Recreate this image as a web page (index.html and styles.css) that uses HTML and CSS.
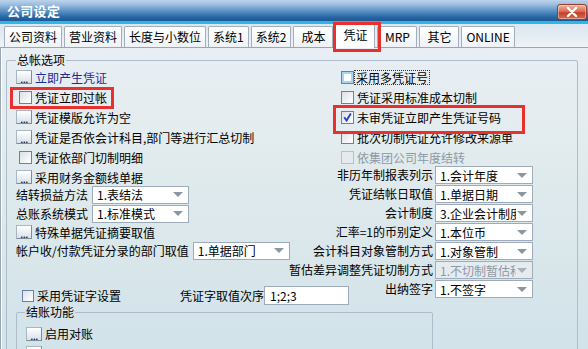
FILE: index.html
```html
<!DOCTYPE html>
<html lang="zh-CN">
<head>
<meta charset="utf-8">
<title>公司设定</title>
<link rel="stylesheet" href="styles.css">
</head>
<body>
<div class="window">
  <div class="titlebar">
    <span class="title">公司设定</span>
    <div class="close"><svg width="12" height="10" viewBox="0 0 12 10"><path d="M2 1 L10 9 M10 1 L2 9" stroke="#fff" stroke-width="2.4" stroke-linecap="round"/></svg></div>
  </div>
  <div class="tabstrip">
    <div class="tab">公司资料</div>
    <div class="tab">营业资料</div>
    <div class="tab">长度与小数位</div>
    <div class="tab">系统1</div>
    <div class="tab">系统2</div>
    <div class="tab">成本</div>
    <div class="tab active">凭证</div>
    <div class="tab">MRP</div>
    <div class="tab">其它</div>
    <div class="tab">ONLINE</div>
  </div>
  <div class="panel">
    <fieldset class="group main">
      <legend>总帐选项</legend>
      <div class="cols">
        <div class="col left">
          <div class="row"><span class="dots">...</span><span class="link">立即产生凭证</span></div>
          <div class="row"><span class="cb"></span><span>凭证立即过帐</span></div>
          <div class="row"><span class="dots">...</span><span>凭证模版允许为空</span></div>
          <div class="row"><span class="dots">...</span><span>凭证是否依会计科目,部门等进行汇总切制</span></div>
          <div class="row"><span class="cb"></span><span>凭证依部门切制明细</span></div>
          <div class="row"><span class="dots">...</span><span>采用财务金额线单据</span></div>
          <div class="srow first"><span class="lbl">结转损益方法</span><div class="sel"><span class="val">1.表结法</span><span class="arr"></span></div></div>
          <div class="srow"><span class="lbl">总账系统模式</span><div class="sel"><span class="val">1.标准模式</span><span class="arr"></span></div></div>
          <div class="row short"><span class="dots">...</span><span>特殊单据凭证摘要取值</span></div>
          <div class="srow"><span class="lbl">帐户收/付款凭证分录的部门取值</span><div class="sel"><span class="val">1.单据部门</span><span class="arr"></span></div></div>
          <div class="row wordrow"><span class="cb small"></span><span>采用凭证字设置</span><span class="wlbl">凭证字取值次序</span><span class="input">1;2;3</span></div>
        </div>
        <div class="col right">
          <div class="row"><span class="cb focus"></span><span class="focustext">采用多凭证号</span></div>
          <div class="row"><span class="cb"></span><span>凭证采用标准成本切制</span></div>
          <div class="row"><span class="cb checked"><svg width="11" height="11" viewBox="0 0 11 11"><path d="M2.2 5.2 L4.6 8.6 L8.8 1.6" fill="none" stroke="#2348b8" stroke-width="1.9"/></svg></span><span>未审凭证立即产生凭证号码</span></div>
          <div class="row"><span class="cb"></span><span>批次切制凭证允许修改来源单</span></div>
          <div class="row disabled"><span class="cb"></span><span>依集团公司年度结转</span></div>
          <div class="rsrow first"><span class="lbl">非历年制报表列示</span><div class="sel"><span class="val">1.会计年度</span><span class="arr"></span></div></div>
          <div class="rsrow"><span class="lbl">凭证结帐日取值</span><div class="sel"><span class="val">1.单据日期</span><span class="arr"></span></div></div>
          <div class="rsrow"><span class="lbl">会计制度</span><div class="sel"><span class="val">3.企业会计制度</span><span class="arr"></span></div></div>
          <div class="rsrow"><span class="lbl">汇率=1的币别定义</span><div class="sel"><span class="val">1.本位币</span><span class="arr"></span></div></div>
          <div class="rsrow"><span class="lbl">会计科目对象管制方式</span><div class="sel"><span class="val">1.对象管制</span><span class="arr"></span></div></div>
          <div class="rsrow"><span class="lbl">暂估差异调整凭证切制方式</span><div class="sel dis"><span class="val">1.不切制暂估科目</span><span class="arr"></span></div></div>
          <div class="rsrow"><span class="lbl">出纳签字</span><div class="sel"><span class="val">1.不签字</span><span class="arr"></span></div></div>
        </div>
      </div>
      <fieldset class="group sub">
        <legend>结账功能</legend>
        <div class="row first"><span class="dots">...</span><span>启用对账</span></div>
        <div class="row"><span class="dots">...</span></div>
      </fieldset>
    </fieldset>
  </div>
</div>
<div class="mark mark-tab"></div>
<div class="mark mark-left"></div>
<div class="mark mark-right"></div>
</body>
</html>
```

FILE: styles.css
```css
* { box-sizing: border-box; }
html, body { margin: 0; padding: 0; }
body {
  position: relative;
  width: 588px;
  height: 349px;
  overflow: hidden;
  font-family: "Noto Sans CJK SC", "Noto Sans", sans-serif;
  font-size: 12px;
  color: #000;
  background: #d6e3ea;
}
.window { display: flex; flex-direction: column; height: 349px; }

.titlebar {
  flex: none;
  height: 24px;
  display: flex;
  align-items: flex-start;
  padding-left: 7px;
  background: linear-gradient(#bcd3ea 0, #9dbfe0 18%, #5d93c6 45%, #2a68a5 70%, #1b5895 87%, #2bb8e6 88%, #2bb8e6 100%);
}
.title {
  color: #fff;
  font-weight: bold;
  font-size: 13px;
  line-height: 21px;
  letter-spacing: 0.3px;
}
.close {
  margin: 4px 1px 0 auto;
  width: 30px;
  height: 16px;
  border: 1px solid #9a3b2c;
  border-radius: 3px;
  background: linear-gradient(#f0b7a4, #d9634a 50%, #c0402a 55%, #d86a4e);
  display: flex;
  align-items: center;
  justify-content: center;
  box-shadow: inset 0 0 0 1px rgba(255,255,255,0.4);
}

.tabstrip {
  flex: none;
  height: 24px;
  display: flex;
  align-items: flex-end;
  gap: 2px;
  padding-left: 4px;
  background: linear-gradient(#dbe6ef, #eef3f7);
  border-bottom: 1px solid #97a5b4;
}
.tab {
  height: 21px;
  min-width: 40px;
  padding: 0 4px;
  border: 1px solid #a3aebc;
  border-bottom: none;
  border-radius: 2px 2px 0 0;
  background: linear-gradient(#ffffff, #eef2f6);
  line-height: 20px;
  text-align: center;
  white-space: nowrap;
}
.tab.active {
  height: 24px;
  margin-bottom: -1px;
  background: #fff;
  line-height: 19px;
  position: relative;
}

.panel {
  flex: 1;
  border-left: 1px solid #9aa8b6;
  box-shadow: inset 1px 0 0 #fff;
  padding: 0 0 0 5px;
  background: linear-gradient(#e8eef4 0%, #e3ecee 30%, #dae7eb 65%, #d2e3ea 100%);
  overflow: hidden;
}

fieldset.group {
  margin: 0;
  border: 1px solid #aebdcb;
  border-radius: 2px;
  min-inline-size: 0;
}
fieldset.group legend {
  padding: 0 1px;
  line-height: 14px;
  font-size: 12px;
}
.main {
  margin-top: 5px !important;
  width: 572px;
  padding: 0 8px 40px 9px;
}
.cols {
  display: grid;
  grid-template-columns: 317px minmax(0, 1fr);
}
.col { display: flex; flex-direction: column; min-width: 0; }

.row {
  height: 20px;
  display: flex;
  align-items: center;
  white-space: nowrap;
}
.row.short { height: 18px; }
.dots {
  flex: none;
  width: 16px;
  height: 14px;
  margin-right: 3px;
  border: 1px solid #a9b5c1;
  border-right-color: #7f8c9a;
  border-bottom-color: #7f8c9a;
  background: linear-gradient(#ffffff, #d9e1e9);
  font-size: 11px;
  line-height: 14px;
  text-align: center;
  letter-spacing: -0.5px;
}
.link { color: #1a2d96; }

.cb {
  flex: none;
  width: 13px;
  height: 13px;
  margin: 0 3px 0 3px;
  border: 1px solid #6c7fa8;
  background: linear-gradient(135deg, #dcdfe4, #f9fafb 80%);
  display: flex;
  align-items: center;
  justify-content: center;
}
.cb.small { width: 12px; height: 12px; }
.cb.focus {
  background: #fff;
  box-shadow: inset 0 0 0 2px #a6d5f6;
}
.focustext {
  outline: 1px dotted #333;
  outline-offset: 0;
  padding: 0 1px;
  margin-left: -2px;
  line-height: 13px;
}
.right .row .cb { margin-left: 8px; }
.disabled { color: #8e99a4; }
.disabled .cb { border-color: #b5c0ca; background: #e4eaee; }

.srow {
  height: 19px;
  display: flex;
  align-items: center;
  white-space: nowrap;
}
.srow.first { margin-top: -2px; }
.srow .lbl { margin-right: 4px; }
.srow .sel { width: 97px; }
.rsrow {
  height: 19px;
  display: flex;
  align-items: flex-start;
  justify-content: flex-end;
  padding-right: 36px;
  white-space: nowrap;
}
.rsrow.first { margin-top: -1px; }
.rsrow .lbl { flex: none; margin-right: 2px; line-height: 18px; }
.rsrow .sel { width: 98px; }

.sel {
  flex: none;
  height: 18px;
  display: flex;
  align-items: center;
  border: 1px solid #9dabbb;
  background: #fff;
  padding-left: 4px;
  overflow: hidden;
}
.sel .val {
  flex: 1;
  min-width: 0;
  overflow: hidden;
  white-space: nowrap;
}
.sel .arr {
  flex: none;
  width: 0;
  height: 0;
  margin: 0 5px 0 1px;
  border-left: 5px solid transparent;
  border-right: 5px solid transparent;
  border-top: 5px solid #8b96a3;
}
.sel.dis { background: #e6ebef; color: #8e99a4; }
.sel.dis .arr { border-top-color: #a8b2bc; }

.wordrow { margin-top: 26px; height: 19px; }
.wordrow .cb { margin-left: 6px; }
.wlbl { margin-left: 59px; }
.input {
  flex: none;
  width: 85px;
  height: 19px;
  border: 1px solid #9dabbb;
  background: #fff;
  padding-left: 5px;
  line-height: 17px;
}

.sub {
  margin-top: 4px;
  width: 417px;
  padding: 0 8px 0 8px;
}
.sub .row { height: 19px; }
.sub .row.first { margin-top: 5px; }
.sub .row .dots { margin-left: 1px; }

.mark {
  position: absolute;
  border: 3px solid #e8302f;
  pointer-events: none;
}
.mark-tab { left: 333px; top: 22px; width: 48px; height: 30px; }
.mark-left { left: 10px; top: 87px; width: 104px; height: 22px; }
.mark-right { left: 333px; top: 105px; width: 192px; height: 29px; }
```
